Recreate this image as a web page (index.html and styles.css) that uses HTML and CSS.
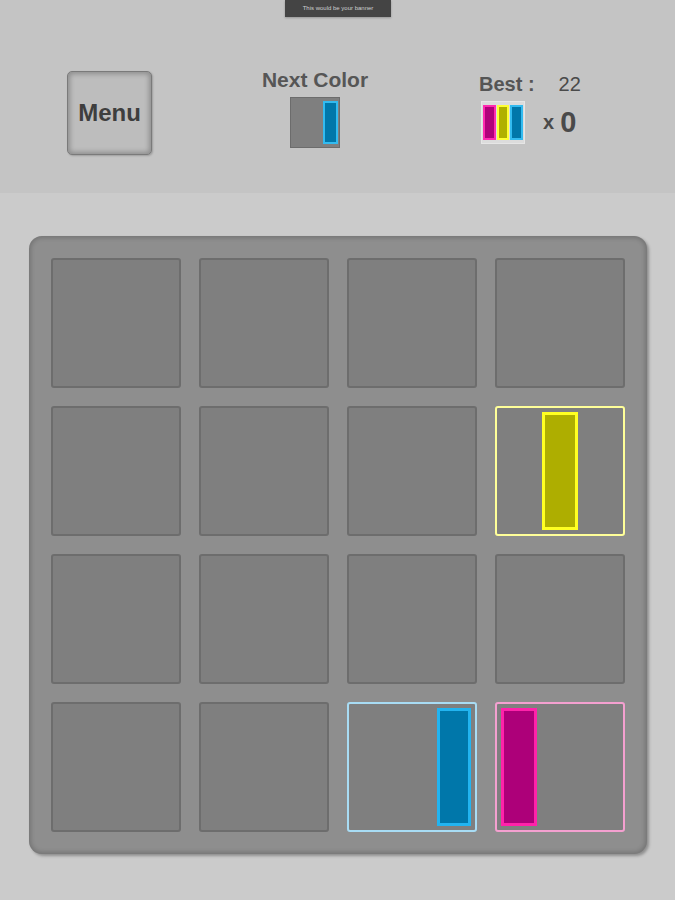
FILE: index.html
```html
<!DOCTYPE html>
<html>
<head>
<meta charset="utf-8">
<link rel="stylesheet" href="styles.css">
</head>
<body>
<div class="header">
  <div class="banner">This would be your banner</div>
  <div class="menu-btn">Menu</div>
  <div class="next">
    <div class="next-label">Next Color</div>
    <div class="next-box"><div class="next-bar"></div></div>
  </div>
  <div class="best">
    <div class="best-row"><span class="best-label">Best :</span><span class="best-val">22</span></div>
    <div class="best-row2">
      <div class="best-icon"><span class="ib m"></span><span class="ib y"></span><span class="ib c"></span></div>
      <span class="times">x</span><span class="mult">0</span>
    </div>
  </div>
</div>
<div class="main">
  <div class="board">
    <div class="cell"></div><div class="cell"></div><div class="cell"></div><div class="cell"></div>
    <div class="cell"></div><div class="cell"></div><div class="cell"></div>
    <div class="cell yellow center"><div class="bar"></div></div>
    <div class="cell"></div><div class="cell"></div><div class="cell"></div><div class="cell"></div>
    <div class="cell"></div><div class="cell"></div>
    <div class="cell blue right"><div class="bar"></div></div>
    <div class="cell pink left"><div class="bar"></div></div>
  </div>
</div>
</body>
</html>
```
FILE: styles.css
```css
* { box-sizing: border-box; }
html, body { margin: 0; padding: 0; }
body {
  width: 675px;
  height: 900px;
  background: #cbcbcb;
  font-family: "Liberation Sans", Arial, sans-serif;
  overflow: hidden;
}
.header {
  position: relative;
  height: 193px;
  background: #c4c4c4;
  display: flex;
  align-items: flex-start;
}
.banner {
  position: absolute;
  top: 0;
  left: 285px;
  width: 106px;
  height: 17px;
  background: #444444;
  color: #cfcfcf;
  font-size: 6px;
  line-height: 17px;
  text-align: center;
  box-shadow: 0 1px 2px rgba(0,0,0,0.25);
}
.menu-btn {
  margin-left: 67px;
  margin-top: 71px;
  width: 85px;
  height: 84px;
  border: 1px solid #7a7a7a;
  border-radius: 5px;
  background: #bdbdbd;
  box-shadow: inset 0 0 5px 2px rgba(0,0,0,0.25), 1px 1px 2px rgba(0,0,0,0.2);
  color: #3e3e3e;
  font-size: 24px;
  font-weight: bold;
  display: flex;
  align-items: center;
  justify-content: center;
}
.next {
  margin-left: 100px;
  margin-top: 68px;
  width: 126px;
  display: flex;
  flex-direction: column;
  align-items: center;
}
.next-label {
  font-size: 21px;
  font-weight: bold;
  color: #565656;
  line-height: 24px;
}
.next-box {
  margin-top: 5px;
  width: 50px;
  height: 51px;
  background: #7f7f7f;
  border: 1px solid #6c6c6c;
  display: flex;
  justify-content: flex-end;
  padding: 3px 1px;
}
.next-bar {
  width: 15px;
  height: 100%;
  background: #0077aa;
  border: 2px solid #33bbf0;
}
.best {
  margin-left: 101px;
  margin-top: 72px;
  display: flex;
  flex-direction: column;
}
.best-row {
  display: flex;
  font-size: 20px;
  color: #555555;
  line-height: 24px;
  font-weight: bold;
}
.best-val {
  margin-left: 24px;
  font-weight: normal;
  color: #4a4a4a;
}
.best-row2 {
  display: flex;
  align-items: center;
  margin-top: 5px;
}
.best-icon {
  margin-left: 2px;
  width: 44px;
  height: 43px;
  border: 1px solid #e6e6e6;
  background: #dcdcdc;
  display: flex;
  gap: 1px;
  padding: 3px 1px;
}
.ib {
  flex: 1;
  border: 2px solid;
}
.ib.m { background: #b0007a; border-color: #ff2ab0; }
.ib.y { background: #b0b000; border-color: #ffff33; }
.ib.c { background: #0077aa; border-color: #33bbf0; }
.times {
  margin-left: 18px;
  font-size: 20px;
  font-weight: bold;
  color: #4a4a4a;
}
.mult {
  margin-left: 6px;
  font-size: 29px;
  color: #4a4a4a;
  font-weight: bold;
}
.main {
  padding: 43px 0 0 29px;
}
.board {
  width: 618px;
  height: 618px;
  padding: 22px;
  border-radius: 13px;
  background: #8e8e8e;
  box-shadow: inset 0 0 4px 2px rgba(0,0,0,0.18), 2px 2px 3px rgba(0,0,0,0.3);
  display: grid;
  grid-template-columns: repeat(4, 130px);
  grid-template-rows: repeat(4, 130px);
  gap: 18px;
}
.cell {
  background: #7f7f7f;
  border: 2px solid #6d6d6d;
  border-radius: 3px;
  display: flex;
  padding: 4px;
}
.cell.center { justify-content: center; }
.cell.right { justify-content: flex-end; }
.cell.left { justify-content: flex-start; }
.cell .bar {
  width: 36px;
  height: 100%;
  border: 3px solid;
}
.cell.yellow { border-color: #ffff99; }
.cell.yellow .bar { background: #aeae00; border-color: #ffff22; }
.cell.blue { border-color: #a8dcf4; }
.cell.blue .bar { background: #0077aa; border-color: #22b4f0; width: 34px; }
.cell.pink { border-color: #f4a0d0; }
.cell.pink .bar { background: #ad0079; border-color: #ff22aa; }
```
